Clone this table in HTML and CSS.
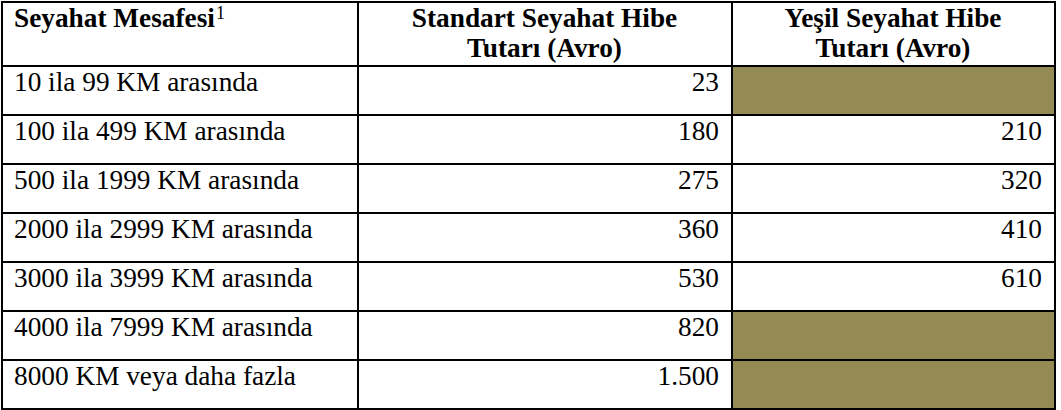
FILE: index.html
```html
<!DOCTYPE html>
<html lang="tr">
<head>
<meta charset="utf-8">
<title>Seyahat Hibe Tutarları</title>
<link rel="stylesheet" href="styles.css">
</head>
<body>
<div class="wrap">
  <div class="grid" role="table">
    <div class="cell head left" role="columnheader">Seyahat Mesafesi<sup class="note">1</sup></div>
    <div class="cell head center" role="columnheader">Standart Seyahat Hibe<br>Tutarı (Avro)</div>
    <div class="cell head center" role="columnheader">Yeşil Seyahat Hibe<br>Tutarı (Avro)</div>

    <div class="cell">10 ila 99 KM arasında</div>
    <div class="cell num">23</div>
    <div class="cell fill"></div>

    <div class="cell">100 ila 499 KM arasında</div>
    <div class="cell num">180</div>
    <div class="cell num">210</div>

    <div class="cell">500 ila 1999 KM arasında</div>
    <div class="cell num">275</div>
    <div class="cell num">320</div>

    <div class="cell">2000 ila 2999 KM arasında</div>
    <div class="cell num">360</div>
    <div class="cell num">410</div>

    <div class="cell">3000 ila 3999 KM arasında</div>
    <div class="cell num">530</div>
    <div class="cell num">610</div>

    <div class="cell">4000 ila 7999 KM arasında</div>
    <div class="cell num">820</div>
    <div class="cell fill"></div>

    <div class="cell">8000 KM veya daha fazla</div>
    <div class="cell num">1.500</div>
    <div class="cell fill"></div>
  </div>
</div>
</body>
</html>
```
FILE: styles.css
```css
html, body {
  margin: 0;
  padding: 0;
  background: #ffffff;
}

body {
  font-family: "Liberation Serif", "Times New Roman", serif;
  font-size: 27.3px;
  line-height: 30px;
  color: #000000;
}

.wrap {
  padding: 1px 0 0 1px;
}

.grid {
  display: grid;
  grid-template-columns: 356px 374px 323px;
  grid-template-rows: 64px repeat(7, 49px);
  width: max-content;
  border-left: 2px solid #000;
  border-top: 2px solid #000;
}

.cell {
  box-sizing: border-box;
  border-right: 2px solid #000;
  border-bottom: 2px solid #000;
  padding: 0 12px 0 11px;
  white-space: nowrap;
}

.head {
  font-weight: bold;
}

.center {
  text-align: center;
}

.num {
  text-align: right;
}

.fill {
  background: #948a54;
}

.note {
  font-weight: normal;
  font-size: 18px;
  line-height: 0;
  vertical-align: 8px;
  margin-left: 1px;
}
```
